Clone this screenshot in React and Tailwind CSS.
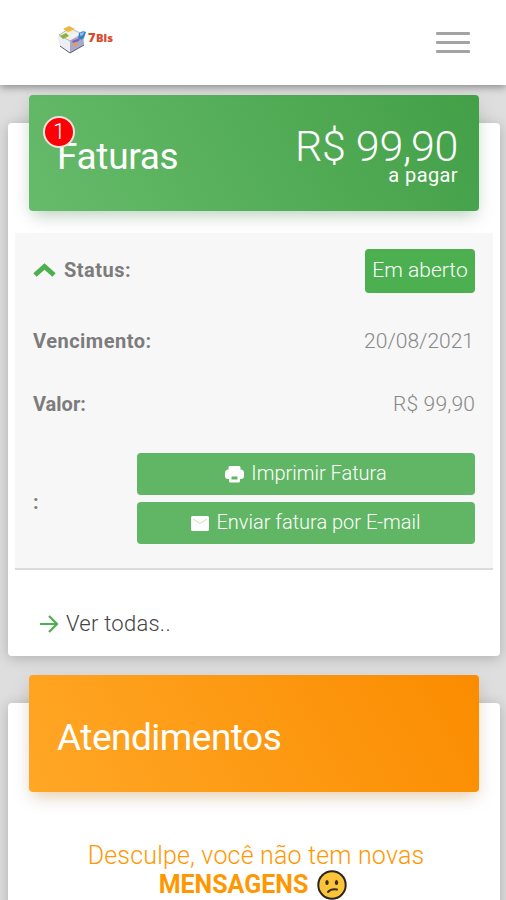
import React from "react";

function Logo() {
  return (
    <svg className="ml-[55px] h-[32px] w-[60px]" viewBox="0 0 60 32">
      <path d="M3 12 L15 16 L28 11 L29 21 L15 29 L5 22Z" fill="#dfe3ed" />
      <path d="M15 16 L28 11 L29 21 L15 29Z" fill="#aaa7cf" />
      <path d="M3 12 L15 16 L15 29 L5 22Z" fill="#eceef4" />
      <path d="M5 22 L15 29 L29 21" fill="none" stroke="#5d616c" strokeWidth="1" />
      <path d="M4 11 L15 4 L27 10 L15 17Z" fill="#f2efdf" stroke="#8e919c" strokeWidth="0.6" />
      <path d="M8 5 L14 2 L20 5 L13 8Z" fill="#efb83c" />
      <path d="M5 12 L11 9 L14 12 L8 15Z" fill="#84b53e" />
      <path d="M14 12 L21 8 L24 11 L17 14Z" fill="#eef3fb" />
      <path d="M24 9 Q28 6 31 8 L29 14 Q26 17 23 14Z" fill="#3b82c4" />
      <path d="M25 9 L29 8 L28 11 L25 12Z" fill="#8dc1e8" />
      <path d="M18 20 L22 18 L22 21 L18 23Z" fill="#ea9d39" />
      <path d="M17 17 L25 14 L24 17 L18 19Z" fill="#7762c4" />
      <text x="33" y="18" fill="#dc4a28" fontFamily="Open Sans, sans-serif" fontWeight="800" fontSize="12" textLength="7.5" lengthAdjust="spacingAndGlyphs">7</text>
      <text x="41" y="18" fill="#d84a31" fontFamily="Open Sans, sans-serif" fontWeight="800" fontSize="10.5" textLength="17" lengthAdjust="spacingAndGlyphs">Bls</text>
    </svg>
  );
}

function Header() {
  return (
    <header className="relative z-10 flex h-[85px] items-center justify-between bg-white pr-[36px] shadow-[0_2px_8px_rgba(0,0,0,0.4)]">
      <div className="-mt-[6px]"><Logo /></div>
      <div className="flex w-[34px] flex-col gap-[6px]">
        <span className="h-[3px] rounded-[1px] bg-[#a3a3a3]" />
        <span className="h-[3px] rounded-[1px] bg-[#a3a3a3]" />
        <span className="h-[3px] rounded-[1px] bg-[#a3a3a3]" />
      </div>
    </header>
  );
}

function PrintIcon() {
  return (
    <svg className="mt-[3px] h-[17px] w-[19px]" viewBox="0 0 19 17">
      <path fill="#fff" fillRule="evenodd" d="M5 0h9q1.500 0 1.500 1.500v2q3.500 0 3.500 3.500v3q0 3-3 3h-1v2q0 1.500-1.500 1.500h-8Q4 16.500 4 15v-2H3q-3 0-3-3V7q0-3.500 3.500-3.500v-2Q3.500 0 5 0ZM6.500 10.500v3h6v-3Z" />
    </svg>
  );
}

function MailIcon() {
  return (
    <svg className="mt-[3px] h-[15px] w-[18px]" viewBox="0 0 18 15">
      <rect width="18" height="15" rx="1.500" fill="#fff" />
      <path d="M2 3 L9 7.500 L16 3" fill="none" stroke="#c3e2c4" strokeWidth="1" />
    </svg>
  );
}

function ConfusedFace() {
  return (
    <svg className="h-[30px] w-[30px]" viewBox="0 0 30 30">
      <circle cx="15" cy="15" r="13.700" fill="#fbc43a" stroke="#28261f" strokeWidth="2" />
      <ellipse cx="10" cy="12.500" rx="1.700" ry="2.500" fill="#3a2d16" />
      <ellipse cx="19.500" cy="12.500" rx="1.700" ry="2.500" fill="#3a2d16" />
      <path d="M11 22 Q14 18.500 20 19.500" fill="none" stroke="#3a2d16" strokeWidth="2" strokeLinecap="round" />
    </svg>
  );
}

function Action({ icon, children }) {
  return (
    <button className="flex h-[42px] w-full items-center justify-center gap-[7px] rounded-[4px] bg-[#60b664] pb-[2px] text-[20px] font-light text-white">
      {icon}
      <span>{children}</span>
    </button>
  );
}

export default function App() {
  return (
    <div className="h-[900px] w-[506px] overflow-hidden bg-[#dedede] font-['Roboto','Liberation_Sans',sans-serif]">
      <Header />

      <section className="mr-[6px] ml-[8px] mt-[38px] h-[533px] rounded-[4px] bg-white px-[7px] shadow-[0_2px_14px_rgba(0,0,0,0.22)]">
        <div className="flow-root">
          <div className="relative mr-[14px] ml-[14px] -mt-[28px] flex h-[116px] justify-between rounded-[4px] bg-[linear-gradient(60deg,#66bb6a,#43a047)] pr-[21px] pl-[28px] text-white shadow-[0_6px_20px_rgba(0,0,0,0.1),0_8px_14px_-6px_rgba(76,175,80,0.3)]">
            <h2 className="pt-[40px] text-[37px] leading-[44px] tracking-[-0.3px]">Faturas</h2>
            <div className="flex flex-col items-end pt-[26px]">
              <span className="text-[43px] leading-[50px] font-light tracking-[-0.3px]">R$ 99,90</span>
              <span className="-mt-[8px] text-[20px] leading-[24px] tracking-[0.4px]">a pagar</span>
            </div>
            <span className="absolute top-[21px] left-[14px] flex h-[32px] w-[32px] items-center justify-center rounded-full border-2 border-[#f2e5dc] bg-[#fb0007] text-[22px] leading-[28px] font-light">1</span>
          </div>
        </div>

        <div className="mt-[22px] h-[337px] border-b-2 border-[#dcdcdc] bg-[#f7f7f7] pr-[18px] pl-[18px] text-[20px] leading-[24px] text-[#7c7c7c]">
          <div className="flex h-[76px] items-center justify-between">
            <div className="flex items-center gap-[8px]">
              <svg className="-mt-[2px] h-[16px] w-[23px]" viewBox="0 0 23 16">
                <path d="M2 13 L11.500 4.500 L21 13" fill="none" stroke="#4caf50" strokeWidth="5" />
              </svg>
              <span className="-mt-[2px] font-bold tracking-[0.5px]">Status:</span>
            </div>
            <span className="flex h-[44px] w-[110px] items-center justify-center rounded-[4px] bg-[#4caf50] pb-[2px] text-[21px] font-light text-white">Em aberto</span>
          </div>
          <div className="flex h-[64px] items-center justify-between">
            <span className="font-bold tracking-[0.5px]">Vencimento:</span>
            <span className="pr-[1px] text-[21px] font-light text-[#888]">20/08/2021</span>
          </div>
          <div className="flex h-[64px] items-center justify-between pb-[2px]">
            <span className="font-bold">Valor:</span>
            <span className="text-[21px] font-light tracking-[0.15px] text-[#888]">R$ 99,90</span>
          </div>
          <div className="flex pt-[16px]">
            <span className="w-[104px] pt-[37px] font-bold">:</span>
            <div className="flex flex-1 flex-col gap-[7px]">
              <Action icon={<PrintIcon />}>Imprimir Fatura</Action>
              <Action icon={<MailIcon />}>Enviar fatura por E-mail</Action>
            </div>
          </div>
        </div>

        <div className="mt-[40px] flex items-center gap-[7px] pl-[24px] text-[22px] leading-[28px] font-light tracking-[0.25px] text-[#444]">
          <svg className="h-[18px] w-[20px]" viewBox="0 0 20 18">
            <path d="M1 9 H18 M10 1 L18 9 L10 17" fill="none" stroke="#4caf50" strokeWidth="2.200" />
          </svg>
          <span>Ver todas..</span>
        </div>
      </section>

      <section className="mr-[6px] ml-[8px] mt-[47px] h-[240px] rounded-[4px] bg-white px-[7px] shadow-[0_2px_14px_rgba(0,0,0,0.22)]">
        <div className="flow-root">
          <div className="mr-[14px] ml-[14px] -mt-[28px] h-[117px] rounded-[4px] bg-[linear-gradient(60deg,#ffa726,#fb8c00)] pl-[28px] text-white shadow-[0_6px_20px_rgba(0,0,0,0.1),0_8px_14px_-6px_rgba(255,152,0,0.3)]">
            <h2 className="pt-[41px] text-[37px] leading-[44px] tracking-[-0.5px]">Atendimentos</h2>
          </div>
        </div>
        <div className="mt-[49px] pr-[2px] text-center text-[25px] leading-[30px] text-[#ff9800]">
          <p className="-mr-[6px] font-light tracking-[0.18px]">Desculpe, você não tem novas</p>
          <p className="-mt-[1px] flex items-center justify-center gap-[9px]">
            <strong className="font-bold">MENSAGENS</strong>
            <ConfusedFace />
          </p>
        </div>
      </section>
    </div>
  );
}
